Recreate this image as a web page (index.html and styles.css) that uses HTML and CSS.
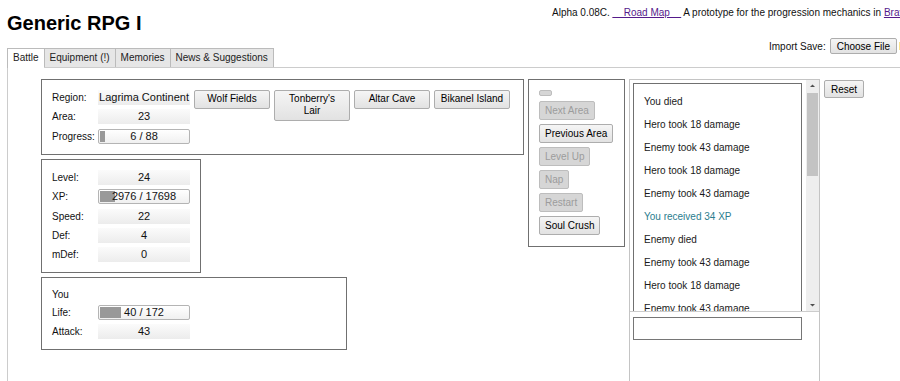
FILE: index.html
```html
<!DOCTYPE html>
<html lang="en">
<head>
    <meta charset="UTF-8">
    <meta name="viewport" content="width=device-width, initial-scale=1.0">
    <title>Generic RPG I</title>
    <link rel="stylesheet" href="styles.css">
</head>
<body>
    <div class="header">
        <h1>Generic RPG I</h1>
        <div class="info">
            <div class="blurb">Alpha 0.08C. <a href="#">__Road Map__</a> A prototype for the progression mechanics in <a href="#">Bravely Default</a></div>
            <div class="import">Import Save: <button class="btn file-btn">Choose File</button><span class="export">Export Save</span></div>
        </div>
    </div>

    <div class="tabs"><span class="tab active">Battle</span><span class="tab">Equipment (!)</span><span class="tab">Memories</span><span class="tab last">News &amp; Suggestions</span></div>

    <div class="panel">
        <div class="main">
            <div class="left">
                <div class="box region-box">
                    <div class="stats">
                        <span class="label">Region:</span><span class="field">Lagrima Continent</span>
                        <span class="label">Area:</span><span class="field">23</span>
                        <span class="label">Progress:</span><span class="field bar"><span class="fill" style="width: 6%"></span><span class="bar-text">6 / 88</span></span>
                    </div>
                    <div class="areas">
                        <button class="btn area-btn">Wolf Fields</button>
                        <button class="btn area-btn">Tonberry's Lair</button>
                        <button class="btn area-btn">Altar Cave</button>
                        <button class="btn area-btn">Bikanel Island</button>
                    </div>
                </div>

                <div class="box">
                    <div class="stats">
                        <span class="label">Level:</span><span class="field">24</span>
                        <span class="label">XP:</span><span class="field bar"><span class="fill" style="width: 16.8%"></span><span class="bar-text">2976 / 17698</span></span>
                        <span class="label">Speed:</span><span class="field">22</span>
                        <span class="label">Def:</span><span class="field">4</span>
                        <span class="label">mDef:</span><span class="field">0</span>
                    </div>
                </div>

                <div class="box you-box">
                    <div class="stats you-stats">
                        <span class="label who">You</span>
                        <span class="label">Life:</span><span class="field bar"><span class="fill" style="width: 23.3%"></span><span class="bar-text">40 / 172</span></span>
                        <span class="label">Attack:</span><span class="field">43</span>
                    </div>
                </div>
            </div>

            <div class="box controls">
                <button class="btn ctrl-btn tiny" disabled></button>
                <button class="btn ctrl-btn" disabled>Next Area</button>
                <button class="btn ctrl-btn">Previous Area</button>
                <button class="btn ctrl-btn" disabled>Level Up</button>
                <button class="btn ctrl-btn" disabled>Nap</button>
                <button class="btn ctrl-btn" disabled>Restart</button>
                <button class="btn ctrl-btn">Soul Crush</button>
            </div>

            <div class="log-panel">
                <div class="log-scroll">
                    <div class="log-view">
                        <div class="log-box">
                            <div class="entry">You died</div>
                            <div class="entry">Hero took 18 damage</div>
                            <div class="entry">Enemy took 43 damage</div>
                            <div class="entry">Hero took 18 damage</div>
                            <div class="entry">Enemy took 43 damage</div>
                            <div class="entry xp">You received 34 XP</div>
                            <div class="entry">Enemy died</div>
                            <div class="entry">Enemy took 43 damage</div>
                            <div class="entry">Hero took 18 damage</div>
                            <div class="entry">Enemy took 43 damage</div>
                            <div class="entry">Hero took 18 damage</div>
                        </div>
                    </div>
                    <div class="scrollbar">
                        <div class="arrow"><svg width="13" height="12" viewBox="0 0 13 12"><path d="M4 7 L6.5 4.5 L9 7 Z" fill="#505050"/></svg></div>
                        <div class="track"><div class="thumb"></div></div>
                        <div class="arrow"><svg width="13" height="12" viewBox="0 0 13 12"><path d="M4 5 L6.5 7.5 L9 5 Z" fill="#505050"/></svg></div>
                    </div>
                </div>
                <input type="text" class="log-input">
            </div>

            <button class="btn reset-btn">Reset</button>
        </div>
    </div>
</body>
</html>
```

FILE: styles.css
```css
html {
    overflow: hidden;
}
body {
    margin: 0;
    padding: 0 0 0 7px;
    font-family: "Liberation Sans", Arial, sans-serif;
    font-size: 10px;
    color: #111;
    background: #fff;
}
.header {
    display: flex;
    height: 48px;
}
h1 {
    margin: 12px 0 0;
    font-size: 20px;
    line-height: 23px;
    color: #000;
}
.info {
    margin-left: auto;
    width: 348px;
    white-space: nowrap;
}
.blurb {
    padding-top: 7px;
    line-height: 12px;
}
.blurb a {
    color: #551a8b;
}
.import {
    margin-top: 19px;
    padding-left: 217px;
    display: flex;
    align-items: center;
}
.file-btn {
    height: 16px;
    margin-left: 4px;
    padding: 0 6px;
    border-radius: 2px;
}
.export {
    margin-left: 2px;
    color: #e0902e;
}

/* tabs */
.tabs {
    font-size: 0;
    border-bottom: 1px solid #ccc;
    white-space: nowrap;
}
.tab {
    display: inline-block;
    vertical-align: top;
    font-size: 10px;
    line-height: 18px;
    padding: 0 5px;
    border: 1px solid #bbb;
    border-bottom: none;
    border-right: none;
    background: #e6e6e6;
    color: #222;
}
.tab.last {
    border-right: 1px solid #bbb;
}
.tab.active {
    background: #fff;
    padding-bottom: 1px;
    margin-bottom: -1px;
}
.panel {
    border-left: 1px solid #ccc;
    padding: 11px 0 0 33px;
    height: 313px;
}
.main {
    display: flex;
    align-items: flex-start;
    gap: 4px;
}
.left {
    display: flex;
    flex-direction: column;
    align-items: flex-start;
    gap: 4px;
}
.box {
    border: 1px solid #707070;
    padding: 10px;
    box-sizing: border-box;
}

/* stat rows */
.stats {
    display: grid;
    grid-template-columns: 46px 92px;
    grid-auto-rows: 15px;
    row-gap: 4.4px;
    align-items: center;
}
.you-stats {
    grid-template-rows: 13px 15px 15px;
    row-gap: 4px;
}
.label {
    white-space: nowrap;
}
.field {
    height: 15px;
    line-height: 15px;
    font-size: 11px;
    text-align: center;
    white-space: nowrap;
    color: #111;
    background: linear-gradient(#fbfbfb, #ececec);
}
.bar {
    position: relative;
    box-sizing: border-box;
    border: 1px solid #b4b4b4;
    border-radius: 2px;
    line-height: 13px;
    background: linear-gradient(#fff, #f0f0f0);
}
.fill {
    position: absolute;
    left: 1px;
    top: 1px;
    bottom: 1px;
    background: #999;
}
.bar-text {
    position: relative;
}
.region-box {
    width: 483px;
    display: flex;
    align-items: flex-start;
}
.areas {
    display: flex;
    align-items: flex-start;
    gap: 4px;
    margin-left: 4px;
}
.you-box {
    width: 306px;
}
.who {
    grid-column: span 2;
}

/* buttons */
.btn {
    font-family: "Liberation Sans", Arial, sans-serif;
    font-size: 10px;
    color: #000;
    border: 1px solid #adadad;
    background: linear-gradient(#f5f5f5, #e2e2e2);
    border-radius: 2px;
    cursor: pointer;
}
.btn:disabled {
    color: #9c9c9c;
    background: #d6d6d6;
    border-color: #bdbdbd;
}
.area-btn {
    width: 76px;
    min-height: 19px;
    padding: 2px 5px 3px;
    line-height: 12px;
}
.controls {
    width: 97px;
    height: 168px;
    display: flex;
    flex-direction: column;
    align-items: flex-start;
    gap: 4px;
}
.ctrl-btn {
    height: 19px;
    padding: 0 5px;
    line-height: 17px;
}
.ctrl-btn.tiny {
    width: 13px;
    height: 6px;
    padding: 0;
    margin-bottom: 1px;
}
.reset-btn {
    height: 18px;
    margin-top: 1px;
    padding: 0 6px;
}

/* log */
.log-panel {
    width: 191px;
    height: 302px;
    box-sizing: border-box;
    border: 1px solid #c4c4c4;
    border-bottom: none;
}
.log-scroll {
    display: flex;
    height: 231px;
    border-bottom: 1px solid #ccc;
}
.log-view {
    flex: 1;
    overflow: hidden;
}
.log-box {
    margin: 3px 0 0 3px;
    width: 169px;
    box-sizing: border-box;
    border: 1px solid #707070;
    padding: 6px 10px;
}
.entry {
    line-height: 13px;
    padding: 5px 0;
    white-space: nowrap;
    color: #1a1a1a;
}
.entry.xp {
    color: #2a7d8e;
}
.scrollbar {
    width: 13px;
    display: flex;
    flex-direction: column;
    background: #eee;
}
.arrow {
    height: 12px;
}
.arrow svg {
    display: block;
}
.track {
    flex: 1;
}
.thumb {
    height: 83px;
    margin: 1px 1px 0;
    background: #c3c3c3;
}
.log-input {
    display: block;
    margin: 5px 0 0 3px;
    width: 169px;
    height: 23px;
    box-sizing: border-box;
    border: 1px solid #767676;
    padding: 0 4px;
}
```
